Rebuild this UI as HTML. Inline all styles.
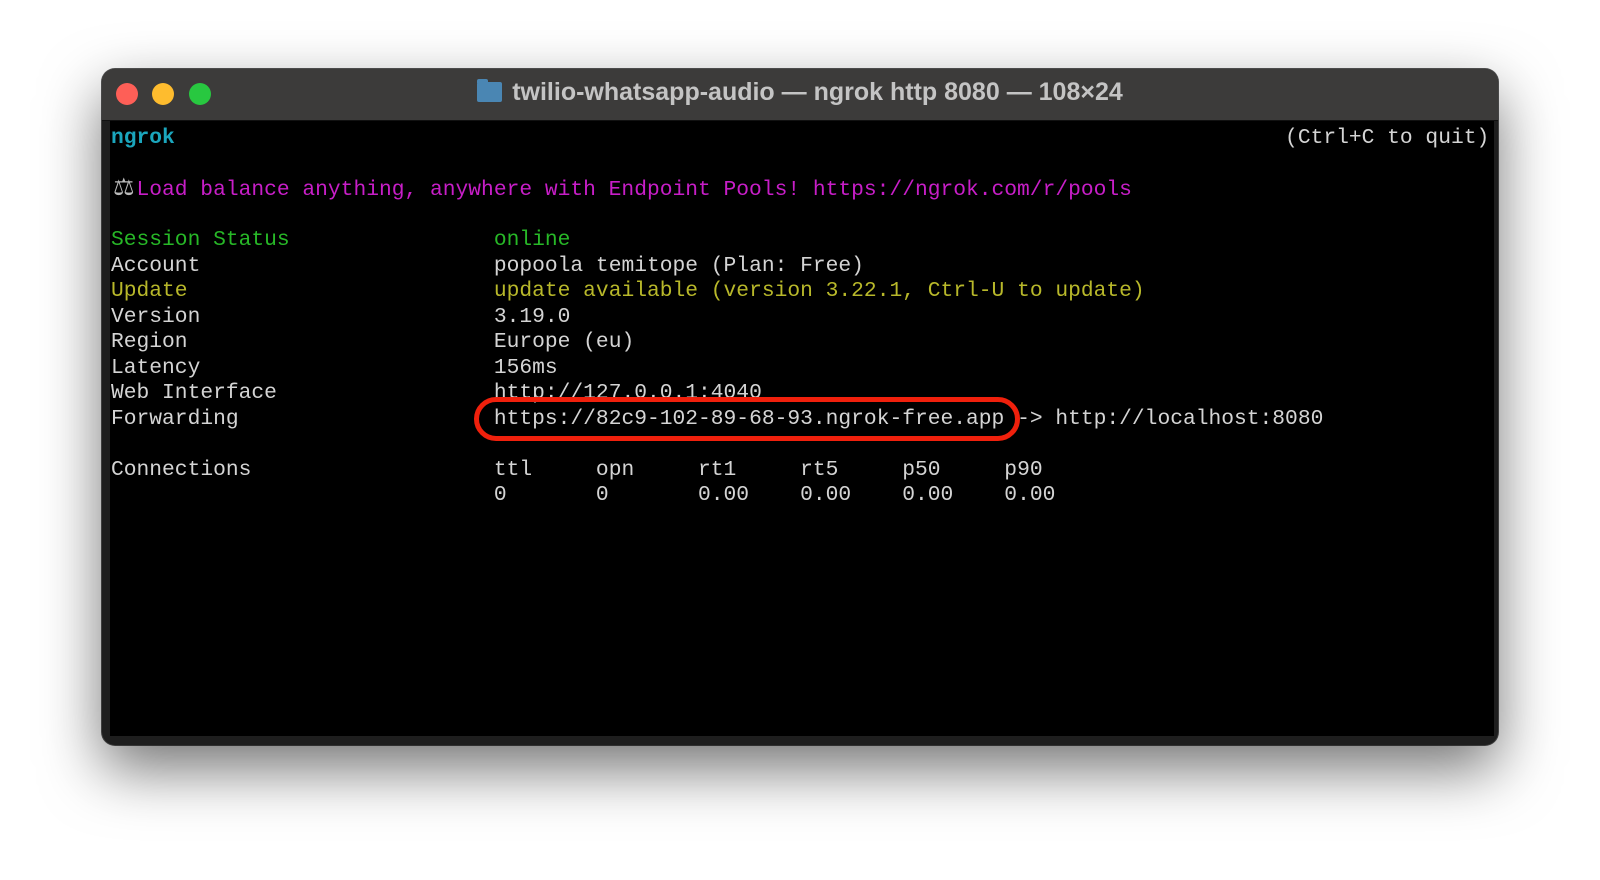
<!DOCTYPE html>
<html><head><meta charset="utf-8"><style>
html,body{margin:0;padding:0;width:1600px;height:880px;background:#fff;overflow:hidden}
.win{position:absolute;left:102px;top:69px;width:1396px;height:676px;border-radius:13px;background:#1e1e1e;box-shadow:0 24px 60px rgba(0,0,0,0.55),0 0 0 1px #555;overflow:hidden}
.tb{position:absolute;left:0;top:0;width:100%;height:51px;background:#3c3b3a;border-bottom:1px solid #111}
.dot{position:absolute;top:14px;width:22px;height:22px;border-radius:50%}
.title{position:absolute;left:0;right:0;top:9px;text-align:center;font:bold 25px "Liberation Sans",sans-serif;color:#c4c4c4}
.folder{display:inline-block;width:25px;height:20px;background:#4a86b3;border-radius:2px;vertical-align:-2px;margin-right:10px;position:relative}
.folder:before{content:"";position:absolute;left:0;top:-3px;width:11px;height:4px;background:#4a86b3;border-radius:2px 2px 0 0}
.term{position:absolute;left:8px;top:52px;width:1384px;height:615px;background:#000}
.l{position:absolute;left:111px;font:21.27px/25.5px "Liberation Mono",monospace;color:#d4d4d4;white-space:pre}
.c{color:#1ba6bd;font-weight:bold}.m{color:#c81ec8}.g{color:#27b827}.y{color:#b8b82a}
.box{position:absolute;left:474px;top:397px;width:536px;height:34px;border:5px solid #f0200c;border-radius:22px}
</style></head><body>
<div class="win">
 <div class="tb">
  <div class="dot" style="left:14px;background:#fe5f57"></div>
  <div class="dot" style="left:50px;background:#febc2e"></div>
  <div class="dot" style="left:87px;background:#28c840"></div>
  <div class="title"><span class="folder"></span>twilio-whatsapp-audio — ngrok http 8080 — 108×24</div>
 </div>
 <div class="term"></div>
</div>
<div style="position:absolute;top:2px;left:0">
<div class="l" style="top:124px"><span class="c">ngrok</span>                                                                                       (Ctrl+C to quit)</div>
<div class="l" style="top:175px"><span style="color:#bbb;font-family:'DejaVu Sans',sans-serif;font-size:24px;line-height:20px;display:inline-block;width:25.5px;text-align:center">⚖</span><span class="m">Load balance anything, anywhere with Endpoint Pools! https://ngrok.com/r/pools</span></div>
<div class="l g" style="top:226px">Session Status                online</div>
<div class="l" style="top:251.5px">Account                       popoola temitope (Plan: Free)</div>
<div class="l y" style="top:277px">Update                        update available (version 3.22.1, Ctrl-U to update)</div>
<div class="l" style="top:302.5px">Version                       3.19.0</div>
<div class="l" style="top:328px">Region                        Europe (eu)</div>
<div class="l" style="top:353.5px">Latency                       156ms</div>
<div class="l" style="top:379px">Web Interface                 http://127.0.0.1:4040</div>
<div class="l" style="top:404.5px">Forwarding                    https://82c9-102-89-68-93.ngrok-free.app -> http://localhost:8080</div>
<div class="l" style="top:455.5px">Connections                   ttl     opn     rt1     rt5     p50     p90</div>
<div class="l" style="top:481px">                              0       0       0.00    0.00    0.00    0.00</div>
</div>
<div class="box"></div>
</body></html>
